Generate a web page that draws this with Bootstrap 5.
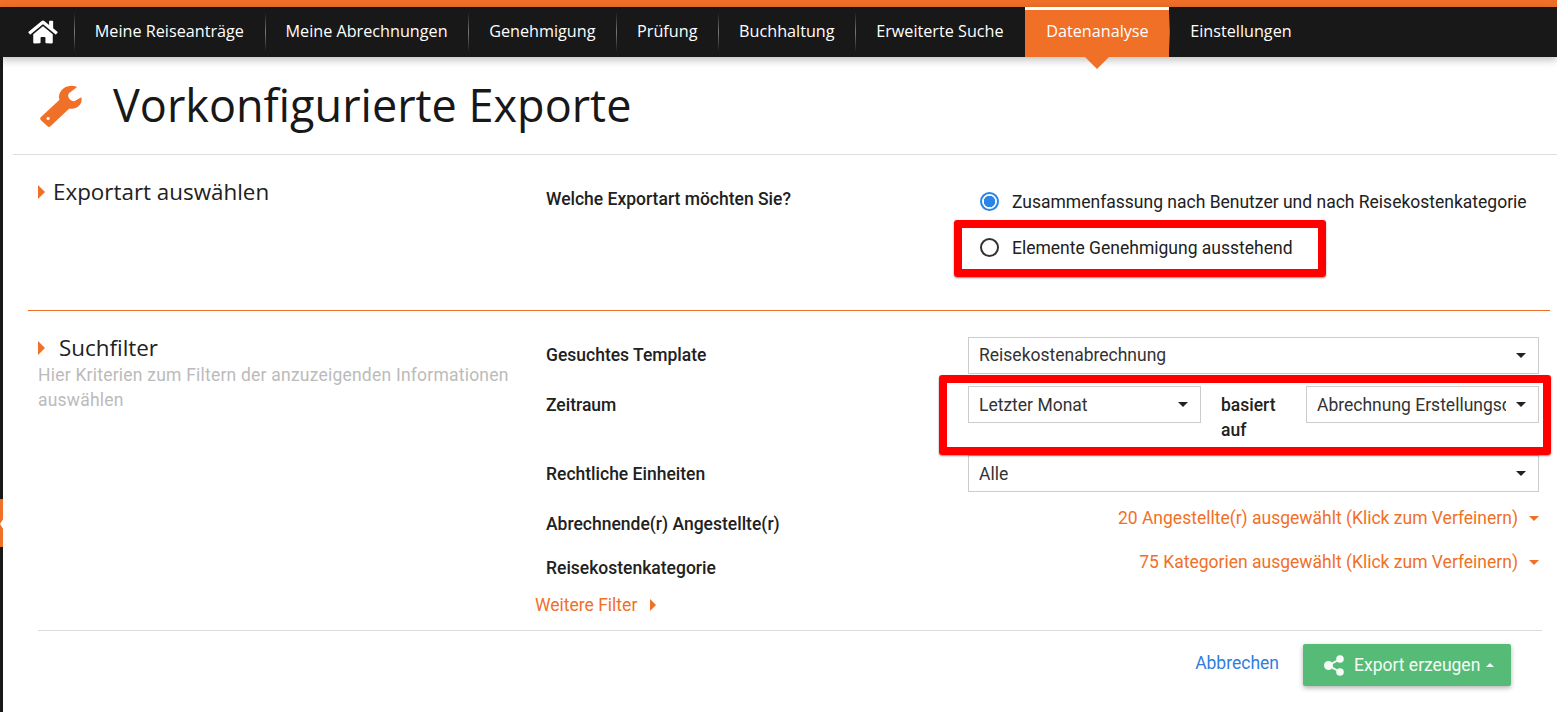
<!DOCTYPE html>
<html lang="de">
<head>
<meta charset="utf-8">
<title>Vorkonfigurierte Exporte</title>
<link rel="stylesheet" href="https://cdn.jsdelivr.net/npm/bootstrap@5.3.0/dist/css/bootstrap.min.css">
<style>
html,body{height:712px;overflow:hidden}
body{background:#181818;font-family:Roboto,sans-serif;font-size:17.5px;color:#212121;position:relative}
.top-stripe{height:7px;background:#f07028}
.main-nav{height:50px;background:#181818;padding:0;flex-wrap:nowrap;justify-content:flex-start;box-shadow:0 3px 8px rgba(0,0,0,.25);position:relative;z-index:2}
.main-nav .nav-item{height:50px;display:flex;align-items:center;position:relative}
.main-nav .nav-item+.nav-item::before{content:"";position:absolute;left:0;top:5px;bottom:5px;width:1px;background:linear-gradient(#181818,#777 50%,#181818)}
.main-nav .nav-link{font-family:"Open Sans",sans-serif;font-size:16.2px;color:#fff;padding:0 20.8px;line-height:49px;height:50px;white-space:nowrap}
.main-nav .home-link{padding:0 16px 0 28px;display:flex;align-items:center;height:48px}
.main-nav .nav-item.current{background:#f07028;border-top:3px solid #fff;margin-left:1px}
.main-nav .nav-item.current::before{display:none}
.nav-item.current .nav-link{line-height:43px;height:47px}
.nav-item.current::after{content:"";position:absolute;left:50%;margin-left:-12px;top:47px;border:12px solid transparent;border-top-color:#f07028;border-bottom:0}
.sheet{margin-left:3px;background:#fff;height:655px;position:relative}
.page-head{margin-left:10px;height:98px;border-bottom:1px solid #ddd;display:flex;align-items:center;padding-left:27px;gap:31px}
.page-head h1{font-family:"Open Sans",sans-serif;font-size:45px;font-weight:400;margin:0 0 2px;color:#181818}
.sect-grid{display:grid;grid-template-columns:497px 433px 571px;margin-left:35px;align-items:start}
.sect-title{font-family:"Open Sans",sans-serif;font-size:22.4px;font-weight:400;margin:0;display:flex;align-items:center;color:#212121}
.tri-right{width:0;height:0;border-style:solid;border-width:7px 0 7px 7px;border-color:transparent transparent transparent #f07028;flex:none}
.first{height:155px;padding-top:22px}
.first .sect-title{gap:8px;line-height:30px}
.second .sect-title{gap:14px;line-height:22px}
.field-label{font-weight:500;padding-left:11px;line-height:24px;margin:0}
.first .field-label{padding-top:10px}
.radio-line{display:flex;align-items:center;gap:13px;margin:0 0 22px 12px;height:24px}
.radio-line span{margin-top:3px}
.radio-line input{width:19px;height:19px;margin:0;border:2px solid #333;flex:none;background-image:none}
.radio-line input:checked{border-color:#2a85e8;background:radial-gradient(circle,#2a85e8 0 5.5px,#fff 6px)}
.radio-stack{padding-top:12px}
.orange-rule{margin:0 7px 0 25px;border:0;border-top:1px solid #f07028;opacity:1}
.second{padding-top:26px}
.hint{color:#bbb;line-height:25px;margin:4px 0 0;letter-spacing:.22px}
.form-rows{grid-column:2/4}
.form-line{display:grid;grid-template-columns:433px 571px;align-items:start}
.pick{border-radius:0;border:1px solid #ccc;height:37px;padding:0 32px 0 10px;font-size:17.5px;color:#333;background-position:right 12px center;background-size:10px 5px;background-image:url("data:image/svg+xml,%3Csvg xmlns='http://www.w3.org/2000/svg' viewBox='0 0 10 5'%3E%3Cpath d='M0 0h10L5 5z' fill='%23222'/%3E%3C/svg%3E")}
.line-b .pick,.line-c .pick{padding-top:2px}
.line-a{height:49px}
.line-a .field-label{padding-top:6px}
.line-b{height:69px}
.line-b .field-label{padding-top:7px}
.time-ctrl{display:grid;grid-template-columns:233px 105px 233px;align-items:start}
.joiner-cell{padding:7px 22px 0 20px;font-weight:500;line-height:25px}
.line-c{height:49px}
.line-c .field-label{padding-top:7px}
.line-d{height:44px}
.line-d .field-label{padding-top:8px}
.refine{color:#f07028;text-align:right;line-height:24px;padding-top:2px;display:flex;justify-content:flex-end;align-items:center;height:26px;text-decoration:none;gap:11px}
.tri-down{width:0;height:0;border-style:solid;border-width:5px 5px 0;border-color:#f07028 transparent transparent;flex:none}
.more-filter{color:#f07028;text-decoration:none;display:flex;align-items:center;gap:13px;margin:1px 0 13px 532px;line-height:24px;width:max-content}
.more-filter .tri-right{border-width:6px 0 6px 6px}
.foot-rule{margin:0 15px 13px 35px;border:0;border-top:1px solid #ddd;opacity:1}
.actions{display:flex;justify-content:flex-end;align-items:center;gap:24px;padding-right:46px}
.cancel{color:#2f7de1;text-decoration:none;margin-top:-3px}
.export-btn{background:#57bb78;color:#f4fbf6;border:0;border-radius:2px;width:208px;height:42px;font-size:17.5px;display:flex;align-items:center;justify-content:flex-start;box-shadow:0 2px 5px rgba(0,0,0,.3);padding:0 0 0 21px}
.export-btn svg{margin-right:10px}
.tri-up{width:0;height:0;border-style:solid;border-width:0 4.5px 4.5px;border-color:transparent transparent #f4fbf6;margin-left:6px}
.red-frame{position:absolute;border:8px solid #f00;border-radius:3px;box-shadow:0 1px 2px rgba(0,0,0,.45);pointer-events:none}
.frame-one{left:951px;top:163px;width:372px;height:57px}
.frame-two{left:936px;top:318px;width:612px;height:80px}
.side-tab{position:absolute;left:-3px;top:442px;width:3px;height:48px;background:#f07028;z-index:1}
.side-notch{position:absolute;left:-3px;top:456px;width:0;height:0;border-style:solid;border-width:11px 7px 11px 0;border-color:transparent #fff transparent transparent;z-index:2}
</style>
</head>
<body>
<div class="top-stripe"></div>
<nav class="navbar main-nav">
  <ul class="nav flex-nowrap">
    <li class="nav-item"><a class="nav-link home-link" href="#" aria-label="Start"><svg width="30" height="26" viewBox="0 0 576 512"><path fill="#fff" d="M280.37 148.26L96 300.11V464a16 16 0 0 0 16 16l112.06-.29a16 16 0 0 0 15.92-16V368a16 16 0 0 1 16-16h64a16 16 0 0 1 16 16v95.64a16 16 0 0 0 16 16.05L464 480a16 16 0 0 0 16-16V300L295.67 148.26a12.19 12.19 0 0 0-15.3 0zM571.6 251.47L488 182.56V44.05a12 12 0 0 0-12-12h-56a12 12 0 0 0-12 12v72.61L318.47 43a48 48 0 0 0-61 0L4.34 251.47a12 12 0 0 0-1.6 16.9l25.5 31A12 12 0 0 0 45.15 301l235.22-193.74a12.19 12.19 0 0 1 15.3 0L530.9 301a12 12 0 0 0 16.9-1.6l25.5-31a12 12 0 0 0-1.7-16.93z"/></svg></a></li>
    <li class="nav-item"><a class="nav-link" href="#">Meine Reiseanträge</a></li>
    <li class="nav-item"><a class="nav-link" href="#">Meine Abrechnungen</a></li>
    <li class="nav-item"><a class="nav-link" href="#">Genehmigung</a></li>
    <li class="nav-item"><a class="nav-link" href="#">Prüfung</a></li>
    <li class="nav-item"><a class="nav-link" href="#">Buchhaltung</a></li>
    <li class="nav-item"><a class="nav-link" href="#">Erweiterte Suche</a></li>
    <li class="nav-item current"><a class="nav-link" href="#">Datenanalyse</a></li>
    <li class="nav-item"><a class="nav-link" href="#">Einstellungen</a></li>
  </ul>
</nav>
<main class="sheet">
  <span class="side-tab"></span><span class="side-notch"></span>
  <header class="page-head">
    <svg width="42" height="42" viewBox="118 255 129 129"><path fill="#f07028" fill-rule="evenodd" d="M232 261C210 250 180 262 176 290C176 294 177 297 178 300L121 353Q116 358 121 363L141 382Q146 386 151 381L208 327C230 332 250 315 245 293L226 303C215 310 198 292 207 280ZM143 353a5 5 0 1 0 .01 0z"/></svg>
    <h1>Vorkonfigurierte Exporte</h1>
  </header>

  <section class="sect-grid first">
    <h2 class="sect-title"><span class="tri-right"></span>Exportart auswählen</h2>
    <p class="field-label">Welche Exportart möchten Sie?</p>
    <div class="radio-stack">
      <label class="radio-line"><input class="form-check-input" type="radio" name="exportart" checked><span>Zusammenfassung nach Benutzer und nach Reisekostenkategorie</span></label>
      <label class="radio-line"><input class="form-check-input" type="radio" name="exportart"><span>Elemente Genehmigung ausstehend</span></label>
    </div>
  </section>
  <hr class="orange-rule">

  <section class="sect-grid second">
    <div>
      <h2 class="sect-title"><span class="tri-right"></span>Suchfilter</h2>
      <p class="hint">Hier Kriterien zum Filtern der anzuzeigenden Informationen auswählen</p>
    </div>
    <div class="form-rows">
      <div class="form-line line-a">
        <p class="field-label">Gesuchtes Template</p>
        <select class="form-select pick"><option>Reisekostenabrechnung</option></select>
      </div>
      <div class="form-line line-b">
        <p class="field-label">Zeitraum</p>
        <div class="time-ctrl">
          <select class="form-select pick"><option>Letzter Monat</option></select>
          <div class="joiner-cell">basiert auf</div>
          <select class="form-select pick"><option>Abrechnung Erstellungsdatum</option></select>
        </div>
      </div>
      <div class="form-line line-c">
        <p class="field-label">Rechtliche Einheiten</p>
        <select class="form-select pick"><option>Alle</option></select>
      </div>
      <div class="form-line line-d">
        <p class="field-label">Abrechnende(r) Angestellte(r)</p>
        <a class="refine" href="#">20 Angestellte(r) ausgewählt (Klick zum Verfeinern)<span class="tri-down"></span></a>
      </div>
      <div class="form-line line-d">
        <p class="field-label">Reisekostenkategorie</p>
        <a class="refine" href="#">75 Kategorien ausgewählt (Klick zum Verfeinern)<span class="tri-down"></span></a>
      </div>
    </div>
  </section>
  <a class="more-filter" href="#">Weitere Filter<span class="tri-right"></span></a>
  <hr class="foot-rule">
  <div class="actions">
    <a class="cancel" href="#">Abbrechen</a>
    <button class="btn export-btn" type="button"><svg width="20" height="21" viewBox="0 0 20 21"><g fill="#f4fbf6"><circle cx="4.5" cy="10.5" r="4.5"/><circle cx="16" cy="4" r="3.8"/><circle cx="16" cy="17" r="3.8"/></g><path d="M4.5 10.5L16 4M4.5 10.5L16 17" stroke="#f4fbf6" stroke-width="2"/></svg>Export erzeugen<span class="tri-up"></span></button>
  </div>

  <div class="red-frame frame-one"></div>
  <div class="red-frame frame-two"></div>
</main>
</body>
</html>
